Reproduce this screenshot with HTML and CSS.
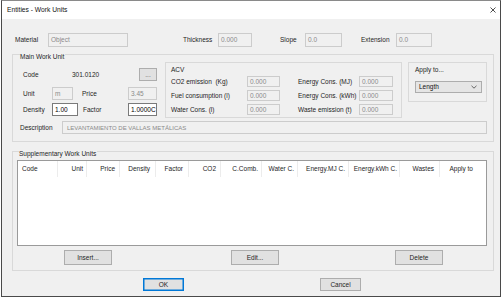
FILE: index.html
```html
<!DOCTYPE html>
<html>
<head>
<meta charset="utf-8">
<link rel="stylesheet" href="styles.css">
</head>
<body>
<div class="window">
  <div class="titlebar">
    <span class="title">Entities - Work Units</span>
    <svg class="close" width="6" height="6" viewBox="0 0 6 6"><path d="M0.5 0.5L5.5 5.5M5.5 0.5L0.5 5.5" stroke="#222" stroke-width="0.8"/></svg>
  </div>
  <div class="client">
    <div class="toprow">
      <span class="lbl w-mat">Material</span><span class="inp dis w-obj">Object</span>
      <span class="lbl w-thick">Thickness</span><span class="inp dis w-th">0.000</span>
      <span class="lbl w-slope">Slope</span><span class="inp dis w-sl">0.0</span>
      <span class="lbl w-ext">Extension</span><span class="inp dis w-ex">0.0</span>
    </div>

    <fieldset class="group main">
      <legend>Main Work Unit</legend>
      <div class="main-grid">
        <div class="leftcol">
          <div class="row r-code">
            <span class="lbl w-code">Code</span><span class="val w-codev">301.0120</span><span class="btn dots">...</span>
          </div>
          <div class="row r-unit">
            <span class="lbl w-l1">Unit</span><span class="inp dis w-unit">m</span>
            <span class="lbl w-price">Price</span><span class="inp dis w-pr">3.45</span>
          </div>
          <div class="row r-dens">
            <span class="lbl w-l1">Density</span><span class="inp en w-den">1.00</span>
            <span class="lbl w-fac">Factor</span><span class="inp en w-pr">1.0000C</span>
          </div>
        </div>
        <div class="box acv">
          <div class="boxtitle">ACV</div>
          <div class="acvrow">
            <span class="lbl w-al">CO2 emission&nbsp; (Kg)</span><span class="inp dis sm w-ai">0.000</span>
            <span class="lbl w-ar">Energy Cons. (MJ)</span><span class="inp dis sm w-ai2">0.000</span>
          </div>
          <div class="acvrow">
            <span class="lbl w-al">Fuel consumption (l)</span><span class="inp dis sm w-ai">0.000</span>
            <span class="lbl w-ar">Energy Cons. (kWh)</span><span class="inp dis sm w-ai2">0.000</span>
          </div>
          <div class="acvrow">
            <span class="lbl w-al">Water Cons. (l)</span><span class="inp dis sm w-ai">0.000</span>
            <span class="lbl w-ar">Waste emission (t)</span><span class="inp dis sm w-ai2">0.000</span>
          </div>
        </div>
        <div class="box apply">
          <div class="boxtitle">Apply to...</div>
          <div class="select">
            <span>Length</span>
            <svg width="6" height="4" viewBox="0 0 6 4"><path d="M0.5 0.8L3 3.2L5.5 0.8" fill="none" stroke="#444" stroke-width="0.8"/></svg>
          </div>
        </div>
      </div>
      <div class="descrow">
        <span class="lbl w-desc">Description</span><span class="inp dis desc">LEVANTAMIENTO DE VALLAS METÁLICAS</span>
      </div>
    </fieldset>

    <fieldset class="group supp">
      <legend>Supplementary Work Units</legend>
      <div class="listview">
        <div class="lv-head">
          <span class="col c-code">Code</span>
          <span class="col c-unit">Unit</span>
          <span class="col c-price">Price</span>
          <span class="col c-dens">Density</span>
          <span class="col c-fac">Factor</span>
          <span class="col c-co2">CO2</span>
          <span class="col c-comb">C.Comb.</span>
          <span class="col c-water">Water C.</span>
          <span class="col c-mj">Energy.MJ C.</span>
          <span class="col c-kwh">Energy.kWh C.</span>
          <span class="col c-waste">Wastes</span>
          <span class="col c-apply">Apply to</span>
        </div>
      </div>
      <div class="btnrow">
        <span class="btn act">Insert...</span>
        <span class="btn act b-edit">Edit...</span>
        <span class="btn act b-del">Delete</span>
      </div>
    </fieldset>

    <div class="dlgbtns">
      <span class="btn dlg ok">OK</span>
      <span class="btn dlg b-cancel">Cancel</span>
    </div>
  </div>
</div>
</body>
</html>
```

FILE: styles.css
```css
* { box-sizing: border-box; }
html, body { margin: 0; padding: 0; }
body {
  width: 504px;
  height: 299px;
  overflow: hidden;
  background: #ffffff;
  font-family: "Liberation Sans", Arial, sans-serif;
  font-size: 6.5px;
  line-height: 8px;
  color: #1e1e1e;
}
.window {
  margin-left: 1px;
  width: 500px;
  height: 297px;
  border: 1px solid #4a4a4a;
  border-top-color: #8a8a8a;
  background: #f0f0f0;
  display: flex;
  flex-direction: column;
}
.titlebar {
  height: 18px;
  flex: none;
  background: #ffffff;
  display: flex;
  align-items: center;
  justify-content: space-between;
  padding: 0 4px 0 5px;
}
.title { font-size: 6.7px; color: #111; }
.client { flex: 1; padding: 14px 6px 0 10px; }

.lbl { display: inline-block; white-space: nowrap; flex: none; }
.val { display: inline-block; flex: none; }
.inp {
  display: flex;
  align-items: center;
  flex: none;
  height: 14px;
  padding-left: 2px;
  border: 1px solid #cccccc;
  background: #f0f0f0;
  white-space: nowrap;
  overflow: hidden;
}
.inp.dis { color: #8a8a8a; }
.inp.en { background: #ffffff; border-color: #7a7a7a; color: #000; }
.inp.sm { height: 11px; }

.toprow { display: flex; align-items: center; height: 14px; padding-left: 3px; }
.w-mat { width: 33px; }
.w-obj { width: 80px; }
.w-thick { width: 35px; margin-left: 55px; }
.w-th { width: 34px; }
.w-slope { width: 25px; margin-left: 28px; }
.w-sl { width: 37px; }
.w-ext { width: 35px; margin-left: 19px; }
.w-ex { width: 36px; }

.group {
  margin: 0;
  border: 1px solid #d9d9d9;
  min-width: 0;
}
.group legend {
  padding: 6px 1px 0 0;
  line-height: 8px;
  font-size: 6.5px;
}
.main { padding: 0 6px 7px 7px; }
.main-grid { display: flex; align-items: flex-start; margin-top: 1px; }
.leftcol { width: 137px; padding: 6px 0 0 3px; flex: none; }
.row { display: flex; align-items: center; height: 13px; }
.row .inp { height: 13px; }
.r-unit { margin-top: 6px; }
.r-dens { margin-top: 3px; }
.w-code { width: 49px; }
.w-codev { width: 67px; }
.btn {
  display: flex;
  align-items: center;
  justify-content: center;
  flex: none;
  background: #e1e1e1;
  border: 1px solid #adadad;
  color: #1e1e1e;
}
.dots { width: 18px; height: 13px; color: #666; }
.w-l1 { width: 29px; }
.w-unit { width: 21px; }
.w-price { width: 46px; margin-left: 9px; }
.w-pr { width: 29px; }
.w-den { width: 26px; }
.w-fac { width: 45px; margin-left: 5px; }

.box { border: 1px solid #d9d9d9; flex: none; }
.boxtitle { line-height: 8px; }
.acv { width: 237px; margin-left: 8px; padding: 3px 0 2px 5px; }
.acv .boxtitle { margin-bottom: 2px; }
.acvrow { display: flex; align-items: center; height: 11px; }
.acvrow + .acvrow { margin-top: 3px; }
.w-al { width: 76px; }
.w-ai { width: 33px; }
.w-ar { width: 61px; margin-left: 18px; }
.w-ai2 { width: 34px; }
.apply { width: 79px; margin-left: 6px; padding: 3px 0 8px 6px; }
.select {
  margin-top: 7px;
  width: 67px;
  height: 12px;
  display: flex;
  align-items: center;
  justify-content: space-between;
  padding: 0 4px 0 3px;
  background: #e5e5e5;
  border: 1px solid #adadad;
  color: #111;
}
.descrow { display: flex; align-items: center; margin-top: 3px; height: 13px; }
.descrow .inp { height: 13px; }
.w-desc { width: 42px; }
.desc { flex: 1; padding-left: 4px; font-size: 6px; color: #9a9a9a; }

.supp { margin-top: 2px; padding: 0 6px 5px 4px; }
.supp legend { margin-left: 2px; }
.listview {
  margin-top: 2px;
  height: 86px;
  background: #ffffff;
  border: 1px solid #9a9a9a;
}
.lv-head { display: flex; height: 16px; }
.col {
  display: flex;
  align-items: center;
  justify-content: flex-end;
  padding-right: 4px;
  border-right: 1px solid #ececec;
  white-space: nowrap;
  flex: none;
}
.c-code { width: 40px; justify-content: flex-start; padding-left: 4px; }
.c-unit { width: 29px; padding-right: 3px; }
.c-price { width: 33px; }
.c-dens { width: 36px; padding-right: 5px; }
.c-fac { width: 33px; padding-right: 5px; }
.c-co2 { width: 32px; }
.c-comb { width: 41px; padding-right: 3px; }
.c-water { width: 36px; padding-right: 3px; }
.c-mj { width: 51px; padding-right: 3px; }
.c-kwh { width: 51px; padding-right: 2px; }
.c-waste { width: 40px; padding-right: 5px; }
.c-apply { width: 38px; padding-right: 5px; border-right: none; }

.btnrow { display: flex; margin-top: 4px; padding-left: 47px; }
.act { width: 48px; height: 15px; }
.b-edit { margin-left: 119px; }
.b-del { margin-left: 116px; }

.dlgbtns { display: flex; margin-top: 7px; padding-left: 131px; }
.dlg { width: 41px; height: 13px; }
.ok { border-color: #0078d7; box-shadow: inset 0 0 0 0.5px #0078d7; }
.b-cancel { margin-left: 136px; }
```
